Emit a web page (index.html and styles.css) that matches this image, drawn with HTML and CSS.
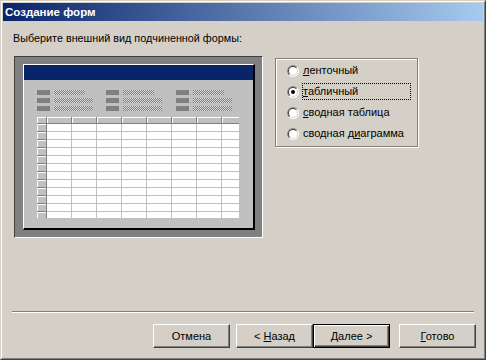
FILE: index.html
```html
<!DOCTYPE html>
<html lang="ru">
<head>
<meta charset="utf-8">
<title>Создание форм</title>
<link rel="stylesheet" href="styles.css">
</head>
<body>
<div class="window">
  <div class="frame">
    <div class="titlebar"><span class="title">Создание форм</span></div>
    <div class="content">
      <div class="prompt">Выберите внешний вид подчиненной формы:</div>
      <div class="main">
        <div class="preview-outer">
          <div class="preview-inner">
            <svg class="preview" width="229" height="163" viewBox="0 0 229 163" shape-rendering="crispEdges">
              <defs>
                <pattern id="dith" width="2" height="2" patternUnits="userSpaceOnUse">
                  <rect width="2" height="2" fill="#d8d8d8"/>
                  <rect width="1" height="1" fill="#808080"/>
                  <rect x="1" y="1" width="1" height="1" fill="#808080"/>
                </pattern>
                <pattern id="cell" x="10" y="7" width="25" height="8" patternUnits="userSpaceOnUse">
                  <rect width="25" height="8" fill="#fff"/>
                  <rect x="24" width="1" height="8" fill="#c0c0c0"/>
                  <rect y="7" width="25" height="1" fill="#c0c0c0"/>
                </pattern>
                <pattern id="sel" x="0" y="7" width="10" height="8" patternUnits="userSpaceOnUse">
                  <rect width="10" height="8" fill="#c0c0c0"/>
                  <rect width="10" height="1" fill="#fff"/>
                  <rect width="1" height="8" fill="#fff"/>
                  <rect y="7" width="10" height="1" fill="#808080"/>
                  <rect x="9" width="1" height="8" fill="#808080"/>
                </pattern>
                <pattern id="hdr" x="10" y="0" width="25" height="7" patternUnits="userSpaceOnUse">
                  <rect width="25" height="7" fill="#c0c0c0"/>
                  <rect width="25" height="1" fill="#fff"/>
                  <rect width="1" height="7" fill="#fff"/>
                  <rect y="6" width="25" height="1" fill="#808080"/>
                  <rect x="24" width="1" height="7" fill="#808080"/>
                </pattern>
              </defs>
              <rect width="229" height="163" fill="#c0c0c0"/>
              <rect width="229" height="15" fill="#0a246a"/>
              <g fill="#808080">
                <rect x="13" y="25" width="13" height="5"/>
                <rect x="13" y="33" width="13" height="5"/>
                <rect x="13" y="41" width="13" height="5"/>
                <rect x="82" y="25" width="13" height="5"/>
                <rect x="82" y="33" width="13" height="5"/>
                <rect x="82" y="41" width="13" height="5"/>
                <rect x="152" y="25" width="13" height="5"/>
                <rect x="152" y="33" width="13" height="5"/>
                <rect x="152" y="41" width="13" height="5"/>
              </g>
              <g fill="url(#dith)">
                <rect x="30" y="25" width="31" height="5"/>
                <rect x="30" y="33" width="39" height="5"/>
                <rect x="30" y="41" width="39" height="5"/>
                <rect x="99" y="25" width="31" height="5"/>
                <rect x="99" y="33" width="39" height="5"/>
                <rect x="99" y="41" width="39" height="5"/>
                <rect x="169" y="25" width="31" height="5"/>
                <rect x="169" y="33" width="39" height="5"/>
                <rect x="169" y="41" width="39" height="5"/>
              </g>
              <svg x="13" y="52" width="202" height="101" viewBox="0 0 202 101">
                <rect width="202" height="101" fill="#fff"/>
                <rect x="0" y="0" width="10" height="7" fill="#c0c0c0"/>
                <rect x="0" y="0" width="10" height="1" fill="#fff"/>
                <rect x="0" y="0" width="1" height="7" fill="#fff"/>
                <rect x="0" y="6" width="10" height="1" fill="#808080"/>
                <rect x="9" y="0" width="1" height="7" fill="#808080"/>
                <rect x="10" y="0" width="192" height="7" fill="url(#hdr)"/>
                <rect x="0" y="7" width="10" height="94" fill="url(#sel)"/>
                <rect x="10" y="7" width="192" height="94" fill="url(#cell)"/>
              </svg>
            </svg>
          </div>
        </div>
        <div class="options">
          <label class="opt">
            <svg class="radio" width="12" height="12" viewBox="0 0 12 12"><use href="#radio-base"/></svg>
            <span class="opt-text"><u>л</u>енточный</span>
          </label>
          <label class="opt">
            <svg class="radio" width="12" height="12" viewBox="0 0 12 12"><use href="#radio-base"/><circle cx="6" cy="6" r="2" fill="#000"/></svg>
            <span class="opt-text focus"><u>т</u>абличный</span>
          </label>
          <label class="opt">
            <svg class="radio" width="12" height="12" viewBox="0 0 12 12"><use href="#radio-base"/></svg>
            <span class="opt-text"><u>с</u>водная таблица</span>
          </label>
          <label class="opt">
            <svg class="radio" width="12" height="12" viewBox="0 0 12 12"><use href="#radio-base"/></svg>
            <span class="opt-text">сводная д<u>и</u>аграмма</span>
          </label>
        </div>
      </div>
      <div class="sep"></div>
      <div class="buttons">
        <button class="btn">Отмена</button>
        <button class="btn btn-back">&lt; <u>Н</u>азад</button>
        <button class="btn btn-default"><u>Д</u>алее &gt;</button>
        <button class="btn btn-done"><u>Г</u>отово</button>
      </div>
    </div>
  </div>
</div>
<svg class="defs" width="0" height="0">
  <defs>
    <clipPath id="tl"><polygon points="0,0 12,0 0,12"/></clipPath>
    <g id="radio-base">
      <circle cx="6" cy="6" r="6" fill="#fff"/>
      <circle cx="6" cy="6" r="6" fill="#808080" clip-path="url(#tl)"/>
      <circle cx="6" cy="6" r="5" fill="#d4d0c8"/>
      <circle cx="6" cy="6" r="5" fill="#404040" clip-path="url(#tl)"/>
      <circle cx="6" cy="6" r="4" fill="#fff"/>
    </g>
  </defs>
</svg>
</body>
</html>
```
FILE: styles.css
```css
html, body {
  margin: 0;
  padding: 0;
  background: #d4d0c8;
}
body {
  font-family: "Liberation Sans", Arial, sans-serif;
  font-size: 11px;
  color: #000;
}
.defs {
  position: absolute;
  width: 0;
  height: 0;
}
.window {
  width: 486px;
  height: 360px;
  box-sizing: border-box;
  border: 1px solid;
  border-color: #d4d0c8 #404040 #404040 #d4d0c8;
  background: #d4d0c8;
}
.frame {
  height: 100%;
  box-sizing: border-box;
  border: 1px solid;
  border-color: #fff #808080 #808080 #fff;
  padding: 1px;
  display: flex;
  flex-direction: column;
}
.titlebar {
  height: 18px;
  flex: none;
  background: linear-gradient(to right, #0a246a, #a6caf0);
  display: flex;
  align-items: center;
  padding-left: 2px;
}
.title {
  color: #fff;
  font-weight: bold;
  font-size: 11.5px;
  line-height: 18px;
}
.content {
  flex: 1;
  display: flex;
  flex-direction: column;
  padding-top: 1px;
}
.prompt {
  margin: 10px 0 0 10px;
  line-height: 13px;
  font-size: 10.8px;
}
.main {
  display: flex;
  align-items: flex-start;
  margin-top: 11px;
}
.preview-outer {
  margin-left: 11px;
  border: 1px solid;
  border-color: #404040 #fff #fff #404040;
  background: #808080;
  padding: 7px 7px 7px 8px;
}
.preview-inner {
  border-style: solid;
  border-width: 1px 2px 2px 1px;
  border-color: #fff #000 #000 #fff;
  display: flex;
}
.preview {
  display: block;
}
.options {
  margin: 2px 0 0 12px;
  width: 143px;
  height: 89px;
  border: 1px solid #808080;
  box-shadow: inset 1px 1px 0 #fff, 1px 1px 0 #fff;
  display: flex;
  flex-direction: column;
  padding: 1px 0 0 11px;
  box-sizing: border-box;
}
.opt {
  display: flex;
  align-items: center;
  height: 21px;
  gap: 3px;
}
.radio {
  flex: none;
}
.opt-text {
  line-height: 15px;
  padding: 0 2px 0 0;
  border: 1px solid transparent;
}
.opt-text.focus {
  border: 1px dotted #000;
  width: 105px;
}
.sep {
  margin: 73px 0 0 9px;
  width: 462px;
  border-top: 1px solid #808080;
  border-bottom: 1px solid #fff;
}
.buttons {
  display: flex;
  margin: 11px 7px 0 0;
  justify-content: flex-end;
}
.btn {
  font-family: "Liberation Sans", Arial, sans-serif;
  font-size: 11px;
  color: #000;
  width: 77px;
  height: 24px;
  margin: 0;
  padding: 0;
  background: #d4d0c8;
  border: 1px solid;
  border-color: #fff #404040 #404040 #fff;
  box-shadow: inset -1px -1px 0 #808080;
  box-sizing: border-box;
}
.btn-back {
  margin-left: 6px;
}
.btn-default {
  border: 1px solid #000;
  box-shadow: inset 1px 1px 0 #fff, inset -1px -1px 0 #404040, inset -2px -2px 0 #808080;
}
.btn-done {
  margin-left: 9px;
}
```
